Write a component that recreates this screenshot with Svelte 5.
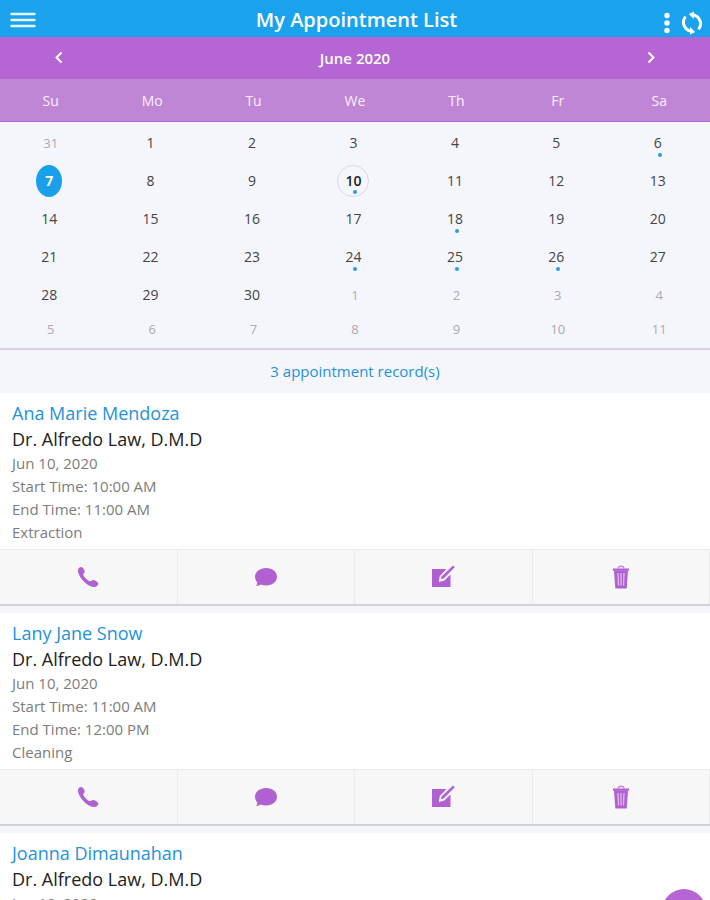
<script>
  const weekdays = ['Su', 'Mo', 'Tu', 'We', 'Th', 'Fr', 'Sa']
  const marked = [6, 10, 18, 24, 25, 26]
  const today = 10
  let selected = 7

  // June 2020, padded with the end of May and the start of July
  let days = []
  days.push({ n: 31, other: true })
  for (let i = 1; i <= 30; i++) days.push({ n: i, other: false })
  for (let i = 1; i <= 11; i++) days.push({ n: i, other: true })

  let weeks = []
  for (let i = 0; i < days.length; i += 7) weeks.push(days.slice(i, i + 7))

  const appointments = [
    { name: 'Ana Marie Mendoza', start: '10:00 AM', end: '11:00 AM', service: 'Extraction' },
    { name: 'Lany Jane Snow', start: '11:00 AM', end: '12:00 PM', service: 'Cleaning' },
    { name: 'Joanna Dimaunahan', start: '1:00 PM', end: '2:00 PM', service: 'Cleaning' }
  ]
</script>

<div class="app">
  <header>
    <button class="icon" aria-label="Menu">
      <svg width="26" height="18" viewBox="0 0 26 18">
        <path d="M1.500 3h23M1.500 9h23M1.500 15h23" stroke="#e4f6ff" stroke-width="2.400" stroke-linecap="round" />
      </svg>
    </button>
    <h1>My Appointment List</h1>
    <div class="tools">
      <button class="icon" aria-label="More">
        <svg width="6" height="22" viewBox="0 0 6 22" fill="#fff">
          <circle cx="3" cy="3.500" r="2.700" />
          <circle cx="3" cy="11" r="2.700" />
          <circle cx="3" cy="18.500" r="2.700" />
        </svg>
      </button>
      <button class="icon" aria-label="Refresh">
        <svg width="22" height="24" viewBox="0 0 22 24">
          <path d="M4.500 5.600A9 9 0 0 0 10.500 20.200M17.500 18.400A9 9 0 0 0 11.500 3.800" fill="none" stroke="#fff" stroke-width="3" />
          <path d="M13 .5L7.800 3l5 5zM9 16l5.200 5L9 23.500z" fill="#fff" />
        </svg>
      </button>
    </div>
  </header>

  <div class="month">
    <button class="icon" aria-label="Previous month">
      <svg width="12" height="16" viewBox="0 0 12 16">
        <path d="M8.500 2.500L3.500 7.500l5 5" fill="none" stroke="#fff" stroke-width="2" />
      </svg>
    </button>
    <h2>June 2020</h2>
    <button class="icon" aria-label="Next month">
      <svg width="12" height="16" viewBox="0 0 12 16">
        <path d="M3.500 2.500l5 5-5 5" fill="none" stroke="#fff" stroke-width="2" />
      </svg>
    </button>
  </div>

  <table>
    <thead>
      <tr>
        {#each weekdays as day}
          <th>{day}</th>
        {/each}
      </tr>
    </thead>
    <tbody>
      {#each weeks as week}
        <tr>
          {#each week as day}
            <td>
              <button
                class="day"
                class:other={day.other}
                class:today={!day.other && day.n === today}
                class:selected={!day.other && day.n === selected}
                on:click={() => { if (!day.other) selected = day.n }}
              >
                {day.n}
                {#if !day.other && marked.includes(day.n)}
                  <span class="dot"></span>
                {/if}
              </button>
            </td>
          {/each}
        </tr>
      {/each}
    </tbody>
  </table>

  <p class="count">{appointments.length} appointment record(s)</p>

  <div class="list">
    {#each appointments as item}
      <article>
        <div class="info">
          <h3>{item.name}</h3>
          <h4>Dr. Alfredo Law, D.M.D</h4>
          <p>Jun 10, 2020</p>
          <p>Start Time: {item.start}</p>
          <p>End Time: {item.end}</p>
          <p>{item.service}</p>
        </div>
        <div class="actions">
          <button aria-label="Call">
            <svg width="22" height="22" viewBox="0 0 22 22">
              <path d="M1.200 3.300C2 1.500 3.800.6 5 1.300c1.300.8 2.900 3.200 2.700 4.700-.1 1-1.400 1.500-1.500 2.500-.1 1.600 5 6.700 6.900 6.800 1.200 0 1.600-1.300 2.900-1.300 1.500 0 4.600 1.600 5.200 2.900.6 1.500-1.300 3.600-3.400 4-2.700.4-6.600-1.300-10.500-4.900C3.500 12.500.2 6.700 1.200 3.300z" />
            </svg>
          </button>
          <button aria-label="Message">
            <svg width="24" height="22" viewBox="0 0 24 22">
              <path d="M12.200 2C18.300 2 23 5.800 23 10.800s-4.700 8.700-10.800 8.700c-2 0-3.900-.4-5.500-1.100-1.300.9-2.900 1.500-4.700 1.700.8-1.200 1.300-2.400 1.300-3.700C1.900 14.900 1 12.900 1 10.800 1 5.800 6 2 12.200 2z" />
            </svg>
          </button>
          <button aria-label="Edit">
            <svg width="24" height="24" viewBox="0 0 24 24">
              <path d="M1 4h14.500L8.700 11.200 7.800 17l5.600-1.400L19.500 9.500V22H1z" />
              <path d="M22 .5l1.700 1.700-11 11.300-2.800.8.700-2.900z" />
            </svg>
          </button>
          <button aria-label="Delete">
            <svg width="18" height="24" viewBox="0 0 18 24">
              <path d="M6 3.500C6 .5 12 .5 12 3.500" fill="none" stroke="#c58bdc" stroke-width="1.400" />
              <path d="M1 3.500h16v2.300H1z" />
              <path d="M2 5.500h14l-1.300 18H3.300z" />
              <path d="M6 8l.5 12.500M9 8v12.500M12 8l-.5 12.500" stroke="#dfb9ed" stroke-width="1.300" />
            </svg>
          </button>
        </div>
      </article>
    {/each}
  </div>

  <button class="fab" aria-label="Add appointment">
    <svg width="18" height="18" viewBox="0 0 18 18">
      <path d="M9 2v14M2 9h14" stroke="#fff" stroke-width="2" />
    </svg>
  </button>
</div>

<style>
  :global(body) {
    margin: 0;
  }

  .app {
    position: relative;
    display: flex;
    flex-direction: column;
    height: 100vh;
    overflow: hidden;
    background: #f5f6fb;
    font-family: "Open Sans", "Noto Sans", sans-serif;
  }

  h1, h2, h3, h4, p {
    margin: 0;
  }

  button {
    padding: 0;
    border: 0;
    background: none;
    font: inherit;
    color: inherit;
    cursor: pointer;
  }

  svg {
    display: block;
  }

  header {
    display: grid;
    grid-template-columns: 1fr auto 1fr;
    align-items: center;
    height: 37px;
    padding: 2px 7px 0 10px;
    box-sizing: border-box;
    background: #1aa3ec;
    color: #fff;
  }

  header > .icon {
    justify-self: start;
  }

  h1 {
    font-size: 20px;
    font-weight: 600;
    line-height: 35px;
  }

  .tools {
    display: flex;
    align-items: center;
    justify-content: flex-end;
    gap: 11px;
    padding-top: 6px;
  }

  .month {
    display: flex;
    align-items: center;
    justify-content: space-between;
    height: 42px;
    padding: 0 53px;
    background: #b565d4;
    color: #fff;
  }

  h2 {
    font-size: 15px;
    font-weight: 600;
    line-height: 20px;
  }

  table {
    width: 100%;
    table-layout: fixed;
    border-collapse: separate;
    border-spacing: 0;
    padding-bottom: 4px;
    border-bottom: 2px solid #dccdec;
  }

  th {
    height: 42px;
    padding: 0;
    background: #bf86d6;
    border-bottom: 1px solid #b267cf;
    color: #fbeeff;
    font-size: 14px;
    font-weight: 400;
  }

  td {
    height: 38px;
    padding: 0;
    text-align: center;
  }

  tbody tr:first-child td {
    padding-top: 2px;
  }

  tbody tr:last-child td {
    height: 30px;
  }

  .day {
    position: relative;
    width: 32px;
    height: 32px;
    margin-right: 3px;
    box-sizing: border-box;
    border-radius: 50%;
    font-size: 14px;
    line-height: 20px;
    color: #444;
  }

  .other {
    height: 24px;
    margin-right: 0;
    font-size: 13px;
    color: #aaabb0;
  }

  .today {
    border: 1px solid #dcd8e6;
    font-weight: 600;
    color: #222;
  }

  .selected {
    width: 26px;
    background: #1aa0ea;
    font-weight: 700;
    color: #fff;
  }

  .dot {
    position: absolute;
    left: 50%;
    bottom: 2px;
    width: 4px;
    height: 4px;
    border-radius: 50%;
    background: #2c9be0;
  }

  .count {
    color: #2492da;
    font-size: 15px;
    line-height: 43px;
    text-align: center;
  }

  .list {
    flex: 1;
    min-height: 0;
    overflow-y: auto;
    scrollbar-width: none;
  }

  article {
    margin-bottom: 7px;
    background: #fff;
    border-bottom: 2px solid #d2d3d5;
  }

  .info {
    padding: 7px 12px 5px;
  }

  h3, h4 {
    font-size: 18px;
    font-weight: 500;
    line-height: 26px;
  }

  h3 {
    color: #2492da;
  }

  h4 {
    color: #1c1c1c;
  }

  .info p {
    color: #7c7c7c;
    font-size: 15px;
    line-height: 23px;
  }

  .actions {
    display: grid;
    grid-template-columns: repeat(4, 1fr);
    border-top: 1px solid #ececec;
    background: #f7f7f7;
  }

  .actions button {
    display: grid;
    place-items: center;
    height: 54px;
    border-right: 1px solid #ececec;
    fill: #b160d2;
  }

  .fab {
    position: absolute;
    right: 4px;
    bottom: -33px;
    display: grid;
    place-items: center;
    width: 44px;
    height: 44px;
    border-radius: 50%;
    background: #b565d4;
  }
</style>
